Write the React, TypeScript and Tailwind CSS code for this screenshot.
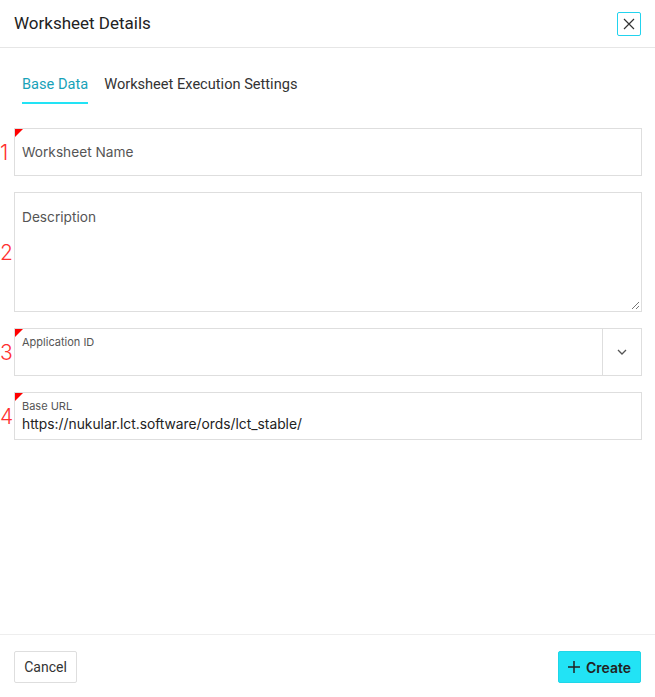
import React from "react";

function Corner() {
  return (
    <div className="absolute left-0 top-0 w-0 h-0 border-t-[8px] border-t-[#ff0000] border-r-[8px] border-r-transparent" />
  );
}

function Num({ n }: { n: string }) {
  return (
    <div className="w-[14px] shrink-0 flex items-center justify-start text-[21px] leading-none text-[#ff3030]" style={{ fontFamily: "Inter, sans-serif", fontWeight: 300 }}>
      {n}
    </div>
  );
}

export default function App() {
  return (
    <div className="w-[655px] h-[697px] bg-white flex flex-col" style={{ fontFamily: "Roboto, 'Liberation Sans', sans-serif" }}>
      <div className="h-[48px] shrink-0 border-b border-[#e6e6e6] flex items-center justify-between pl-[14px] pr-[14px]">
        <div className="text-[17px] text-[#222] font-normal">Worksheet Details</div>
        <button className="w-[24px] h-[24px] border border-[#22d3ee] rounded-[2px] flex items-center justify-center text-[#333]">
          <svg width="12" height="12" viewBox="0 0 12 12" fill="none" stroke="#333" strokeWidth="1.2">
            <path d="M1 1 L11 11 M11 1 L1 11" />
          </svg>
        </button>
      </div>

      <div className="flex-1 flex flex-col">
        <div className="flex gap-[16px] pl-[22px] pt-[26px] h-[56px]">
          <div className="flex flex-col">
            <div className="text-[14.6px] leading-[20px] text-[#17a2b8]">Base Data</div>
            <div className="mt-[8px] h-[2px] bg-[#22e3f5] w-full" />
          </div>
          <div className="text-[14.6px] leading-[20px] text-[#333]">Worksheet Execution Settings</div>
        </div>

        <div className="flex flex-col gap-[16px] pr-[13px] pt-[24px]" style={{ fontFamily: "Inter, sans-serif" }}>
          <div className="flex">
            <Num n="1" />
            <div className="relative flex-1 h-[48px] border border-[#dedede] flex items-center pl-[7px]">
              <Corner />
              <span className="text-[13.7px] text-[#555]">Worksheet Name</span>
            </div>
          </div>

          <div className="flex">
            <Num n="2" />
            <div className="relative flex-1 h-[120px] border border-[#dedede] pl-[7px] pt-[11px]">
              <span className="text-[13.7px] text-[#555]">Description</span>
              <svg className="absolute right-[1px] bottom-[1px]" width="9" height="9" viewBox="0 0 9 9" stroke="#777" strokeWidth="1">
                <path d="M1 8 L8 1 M5 8 L8 5" />
              </svg>
            </div>
          </div>

          <div className="flex">
            <Num n="3" />
            <div className="relative flex-1 h-[48px] border border-[#dedede] flex">
              <Corner />
              <div className="flex-1 pl-[7px] pt-[6px]">
                <div className="text-[11px] leading-[14px] text-[#555]">Application ID</div>
              </div>
              <div className="w-[39px] border-l border-[#dedede] flex items-center justify-center">
                <svg width="10" height="6" viewBox="0 0 10 6" fill="none" stroke="#555" strokeWidth="1.3">
                  <path d="M1 1 L5 5 L9 1" />
                </svg>
              </div>
            </div>
          </div>

          <div className="flex">
            <Num n="4" />
            <div className="relative flex-1 h-[48px] border border-[#dedede] pl-[7px] pt-[6px]">
              <Corner />
              <div className="text-[11px] leading-[14px] text-[#555]">Base URL</div>
              <div className="text-[13.8px] leading-[20px] text-[#222] mt-[1px]">https://nukular.lct.software/ords/lct_stable/</div>
            </div>
          </div>
        </div>
      </div>

      <div className="h-[63px] shrink-0 border-t border-[#eeeeee] flex items-start justify-between px-[14px] pt-[16px]">
        <button className="h-[32px] w-[63px] border border-[#dedede] rounded-[2px] text-[14px] text-[#333] flex items-center justify-center">Cancel</button>
        <button className="h-[32px] w-[83px] bg-[#22e3f5] border border-[#1fd6e8] rounded-[2px] text-[14px] text-[#222] font-semibold flex items-center justify-center gap-[6px]" style={{ fontFamily: "Inter, sans-serif" }}>
          <svg width="12" height="12" viewBox="0 0 12 12" stroke="#222" strokeWidth="1.5">
            <path d="M6 0 V12 M0 6 H12" />
          </svg>
          Create
        </button>
      </div>
    </div>
  );
}
